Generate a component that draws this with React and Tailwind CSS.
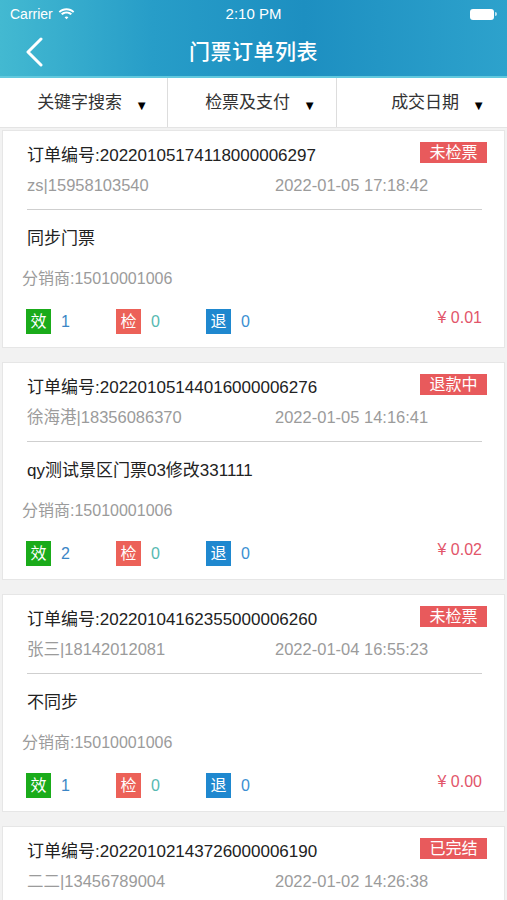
import React from 'react'

const orders = [
  { no: '20220105174118000006297', status: '未检票', user: 'zs|15958103540', time: '2022-01-05 17:18:42', name: '同步门票', dist: '15010001006', valid: 1, checked: 0, refund: 0, price: '0.01' },
  { no: '20220105144016000006276', status: '退款中', user: '徐海港|18356086370', time: '2022-01-05 14:16:41', name: 'qy测试景区门票03修改331111', dist: '15010001006', valid: 2, checked: 0, refund: 0, price: '0.02' },
  { no: '20220104162355000006260', status: '未检票', user: '张三|18142012081', time: '2022-01-04 16:55:23', name: '不同步', dist: '15010001006', valid: 1, checked: 0, refund: 0, price: '0.00' },
  { no: '20220102143726000006190', status: '已完结', user: '二二|13456789004', time: '2022-01-02 14:26:38', name: '同步门票', dist: '15010001006', valid: 1, checked: 1, refund: 0, price: '0.01' },
]

function StatusBar() {
  return (
    <div className="h-[28px] flex items-center justify-between px-[10px] text-white relative">
      <div className="flex items-center gap-[5px] text-[14px]">
        <span>Carrier</span>
        <svg width="17" height="12" viewBox="0 0 17 12" fill="white">
          <path d="M8.5 2.2c2.5 0 4.8 1 6.5 2.6l1.3-1.4C14.2 1.4 11.5 0.2 8.5 0.2S2.8 1.4 0.7 3.4L2 4.8c1.7-1.6 4-2.6 6.5-2.6z" />
          <path d="M8.5 5.4c1.6 0 3.1 0.6 4.2 1.6l1.3-1.4C12.6 4.3 10.6 3.5 8.5 3.5S4.4 4.3 3 5.6L4.3 7c1.1-1 2.6-1.6 4.2-1.6z" />
          <path d="M8.5 8.5c0.8 0 1.4 0.3 1.9 0.7L8.5 11.3 6.6 9.2c0.5-0.4 1.1-0.7 1.9-0.7z" />
        </svg>
      </div>
      <span className="absolute left-1/2 -translate-x-1/2 text-[15px] font-medium">2:10 PM</span>
      <div className="flex items-center">
        <div className="w-[24px] h-[11px] rounded-[3px] bg-white" />
        <div className="w-[2px] h-[4px] bg-white/70 rounded-r-sm ml-[1px]" />
      </div>
    </div>
  )
}

function Header() {
  return (
    <div className="bg-[linear-gradient(90deg,#43b9d1_0%,#279dc8_30%,#1d8fc1_60%,#2da2cc_100%)] border-b-2 border-[#62c9de]">
      <StatusBar />
      <div className="h-[48px] flex items-center relative">
        <svg className="ml-[24px]" width="20" height="30" viewBox="0 0 20 30" fill="none">
          <path d="M17 2 L4 15 L17 28" stroke="white" strokeWidth="3" strokeLinecap="round" strokeLinejoin="round" />
        </svg>
        <span className="absolute left-1/2 -translate-x-1/2 text-white text-[21px] font-medium tracking-[0.5px]">门票订单列表</span>
      </div>
    </div>
  )
}

function Filter({ label, pad, border }) {
  return (
    <div className={'flex-1 flex items-center justify-end ' + pad + (border ? ' border-r border-[#dddddd]' : '')}>
      <span className="text-[17px] text-[#333]">{label}</span>
      <span className="ml-[13px] mt-[6px] text-[13px] leading-none text-black">▼</span>
    </div>
  )
}

function FilterBar() {
  return (
    <div className="h-[50px] bg-white flex border-b border-[#e4e4e4]">
      <Filter label="关键字搜索" pad="pr-[19px]" border />
      <Filter label="检票及支付" pad="pr-[20px]" border />
      <Filter label="成交日期" pad="pr-[22px]" />
    </div>
  )
}

function Count({ ch, bg, num, color }) {
  return (
    <div className="w-[90px] flex items-center">
      <div className={'w-[25px] h-[25px] flex items-center justify-center text-white text-[16px] ' + bg}>{ch}</div>
      <span className={'ml-[10px] text-[16px] ' + color}>{num}</span>
    </div>
  )
}

function OrderCard({ o }) {
  return (
    <div className="mx-[2px] h-[218px] bg-white border border-[#e6e6e6] pt-[11px] shrink-0">
      <div className="flex justify-between items-start pl-[24px] pr-[17px]">
        <span className="mt-[2px] leading-[24px] text-[17px] text-[#222]">订单编号:{o.no}</span>
        <span className="h-[21px] w-[67px] flex items-center justify-center bg-[#e85a5c] text-white text-[16px]">{o.status}</span>
      </div>
      <div className="mt-[5px] leading-[24px] flex text-[16.5px] text-[#9b9b9b] pl-[24px]">
        <span className="w-[248px]">{o.user}</span>
        <span>{o.time}</span>
      </div>
      <div className="mt-[12px] ml-[24px] mr-[22px] h-px bg-[#cfcfcf]" />
      <div className="mt-[17px] leading-[24px] text-[17px] text-[#222] pl-[24px]">{o.name}</div>
      <div className="mt-[16px] leading-[24px] text-[16px] text-[#9b9b9b] pl-[19px]">分销商:{o.dist}</div>
      <div className="mt-[18px] flex items-center pl-[23px] pr-[22px]">
        <Count ch="效" bg="bg-[#1aab1a]" num={o.valid} color="text-[#3b86c6]" />
        <Count ch="检" bg="bg-[#ec6158]" num={o.checked} color="text-[#56b9b1]" />
        <Count ch="退" bg="bg-[#1f88cf]" num={o.refund} color="text-[#3b8fd2]" />
        <span className="ml-auto -mt-[8px] text-[16px] text-[#e2556a]">¥ {o.price}</span>
      </div>
    </div>
  )
}

export default function App() {
  return (
    <div className="w-[507px] h-[900px] overflow-hidden bg-[#f2f2f2] font-['Liberation_Sans','Noto_Sans_CJK_SC',sans-serif]">
      <Header />
      <FilterBar />
      <div className="pt-[2px] flex flex-col gap-[14px]">
        {orders.map((o) => (
          <OrderCard key={o.no} o={o} />
        ))}
      </div>
    </div>
  )
}
